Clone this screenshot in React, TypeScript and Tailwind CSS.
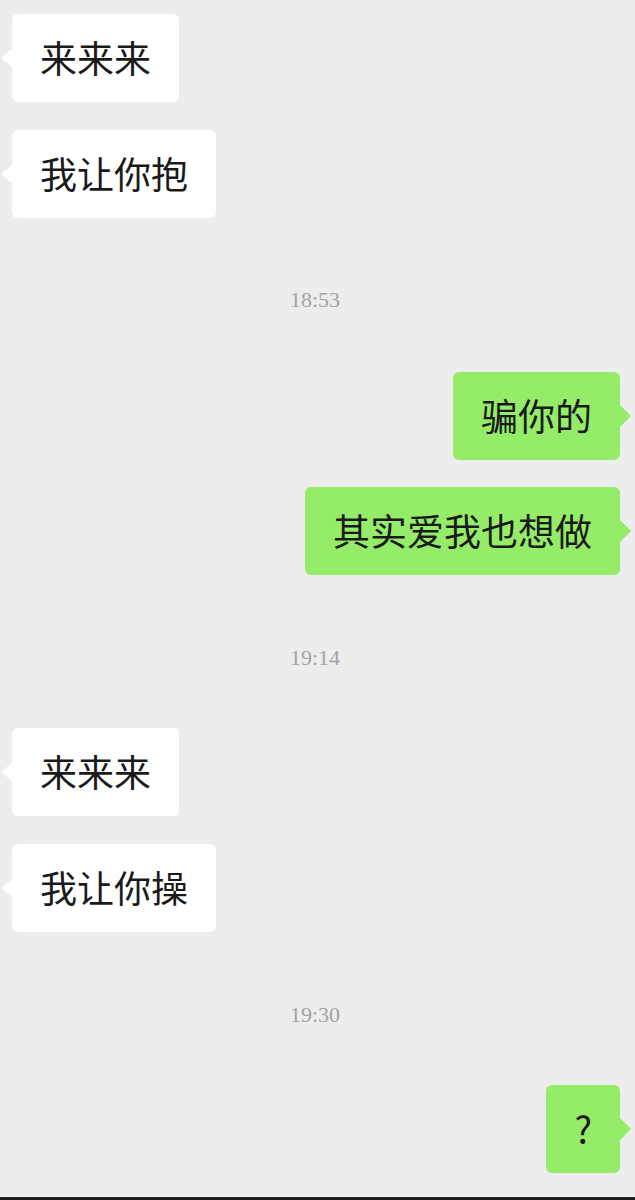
const cjk = "font-['Noto_Sans_CJK_SC',sans-serif]";

function Left({ text, className = "" }: { text: string; className?: string }) {
  return (
    <div className={`self-start ml-3 ${className}`}>
      <div className={`relative h-[88px] px-7 flex items-center bg-white rounded-md text-[37px] text-[#1a1a1a] ${cjk}`}>
        <span className="absolute right-full top-1/2 -translate-y-1/2 w-0 h-0 border-y-[9px] border-y-transparent border-r-[11px] border-r-white" />
        {text}
      </div>
    </div>
  );
}

function Right({ text, className = "" }: { text: string; className?: string }) {
  return (
    <div className={`self-end mr-[15px] ${className}`}>
      <div className={`relative h-[88px] px-7 flex items-center bg-[#95ec69] rounded-md text-[37px] text-[#1a1a1a] ${cjk}`}>
        <span className="absolute left-full top-1/2 -translate-y-1/2 w-0 h-0 border-y-[11px] border-y-transparent border-l-[11px] border-l-[#95ec69]" />
        {text}
      </div>
    </div>
  );
}

function Time({ t, className = "" }: { t: string; className?: string }) {
  return (
    <div className={`h-5 leading-5 pr-[5px] text-center text-[22px] text-[#a3a3a3] font-['Liberation_Serif',serif] ${className}`}>
      {t}
    </div>
  );
}

export default function App() {
  return (
    <div className="w-[635px] h-[1200px] bg-[#ededed] flex flex-col pt-[14px] overflow-hidden">
      <Left text="来来来" />
      <Left text="我让你抱" className="mt-7" />
      <Time t="18:53" className="mt-[72px]" />
      <Right text="骗你的" className="mt-[62px]" />
      <Right text="其实爱我也想做" className="mt-[27px]" />
      <Time t="19:14" className="mt-[73px]" />
      <Left text="来来来" className="mt-[60px]" />
      <Left text="我让你操" className="mt-7" />
      <Time t="19:30" className="mt-[73px]" />
      <Right text="?" className="mt-[60px]" />
      <div className="mt-auto">
        <div className="h-px bg-[#f7f7f7]" />
        <div className="h-[3px] bg-[#1e1e1e]" />
      </div>
    </div>
  );
}
